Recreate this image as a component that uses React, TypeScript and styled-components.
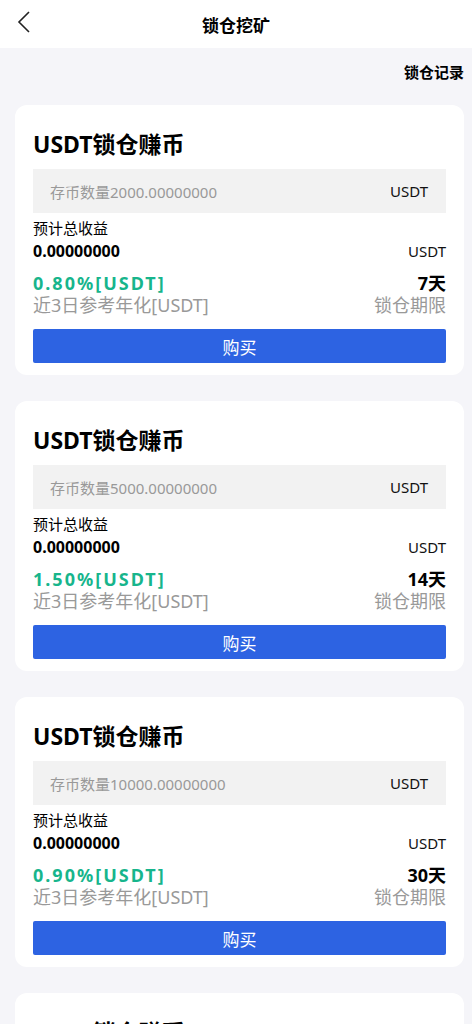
import React from 'react';
import styled, { createGlobalStyle } from 'styled-components';

const GlobalStyle = createGlobalStyle`
	html, body {
		margin: 0;
		padding: 0;
		background: #f5f5f9;
		font-family: 'Noto Sans', 'Noto Sans CJK SC', sans-serif;
		color: #000;
	}
`;

const Page = styled.div`
	width: 100%;
	min-height: 100vh;
	background: #f5f5f9;
`;

const Header = styled.div`
	height: 48px;
	background: #fff;
	display: flex;
	align-items: center;
	justify-content: center;
	position: relative;
`;

const Back = styled.div`
	position: absolute;
	left: 14px;
	top: 10px;
	width: 20px;
	height: 24px;
	display: flex;
	align-items: center;
	justify-content: center;
`;

const Title = styled.div`
	font-size: 17px;
	font-weight: 700;
`;

const RecordRow = styled.div`
	display: flex;
	justify-content: flex-end;
	padding: 13px 8px 0 0;
	height: 44px;
	box-sizing: border-box;
`;

const RecordLink = styled.div`
	font-size: 15px;
	font-weight: 700;
	line-height: 22px;
`;

const List = styled.div`
	display: flex;
	flex-direction: column;
	gap: 26px;
	padding: 13px 8px 26px 15px;
`;

const Card = styled.div`
	background: #fff;
	border-radius: 12px;
	padding: 23px 18px 12px 18px;
	display: flex;
	flex-direction: column;
`;

const CardTitle = styled.div`
	font-size: 23px;
	font-weight: 700;
	line-height: 32px;
`;

const InputBox = styled.div`
	margin-top: 9px;
	height: 44px;
	background: #f2f2f2;
	display: flex;
	align-items: center;
	justify-content: space-between;
	padding: 0 18px 0 17px;
`;

const Placeholder = styled.span`
	font-size: 15px;
	color: #999;
`;

const Unit = styled.span`
	font-size: 15px;
	color: #111;
`;

const Label = styled.div`
	margin-top: 5px;
	font-size: 15px;
	line-height: 20px;
`;

const Row = styled.div<{ $top?: number }>`
	display: flex;
	justify-content: space-between;
	align-items: center;
	margin-top: ${(p) => p.$top || 0}px;
`;

const Amount = styled.span`
	font-size: 16px;
	font-weight: 700;
	line-height: 24px;
`;

const Rate = styled.span`
	font-size: 18px;
	font-weight: 700;
	color: #17b58c;
	letter-spacing: 2px;
	line-height: 22px;
`;

const Days = styled.span`
	font-size: 18px;
	font-weight: 700;
	line-height: 22px;
`;

const Sub = styled.span`
	font-size: 18px;
	color: #999;
	line-height: 22px;
`;

const BuyButton = styled.button`
	margin-top: 13px;
	height: 34px;
	border: none;
	border-radius: 2px;
	background: #2d63e2;
	color: #fff;
	font-family: inherit;
	font-size: 17px;
	cursor: pointer;
`;

const plans = [
	{ amount: '2000.00000000', rate: '0.80%', days: 7 },
	{ amount: '5000.00000000', rate: '1.50%', days: 14 },
	{ amount: '10000.00000000', rate: '0.90%', days: 30 },
	{ amount: '20000.00000000', rate: '1.20%', days: 60 },
];

const App = () => {
	return (
		<Page>
			<GlobalStyle />
			<Header>
				<Back>
					<svg width="14" height="22" viewBox="0 0 14 22">
						<polyline points="12,1 2,11 12,21" fill="none" stroke="#222" strokeWidth="1.6" />
					</svg>
				</Back>
				<Title>锁仓挖矿</Title>
			</Header>
			<RecordRow>
				<RecordLink>锁仓记录</RecordLink>
			</RecordRow>
			<List>
				{plans.map((p) => (
					<Card key={p.amount}>
						<CardTitle>USDT锁仓赚币</CardTitle>
						<InputBox>
							<Placeholder>存币数量{p.amount}</Placeholder>
							<Unit>USDT</Unit>
						</InputBox>
						<Label>预计总收益</Label>
						<Row $top={1}>
							<Amount>0.00000000</Amount>
							<Unit>USDT</Unit>
						</Row>
						<Row $top={9}>
							<Rate>{p.rate}[USDT]</Rate>
							<Days>{p.days}天</Days>
						</Row>
						<Row>
							<Sub>近3日参考年化[USDT]</Sub>
							<Sub>锁仓期限</Sub>
						</Row>
						<BuyButton>购买</BuyButton>
					</Card>
				))}
			</List>
		</Page>
	);
};

export default App;
